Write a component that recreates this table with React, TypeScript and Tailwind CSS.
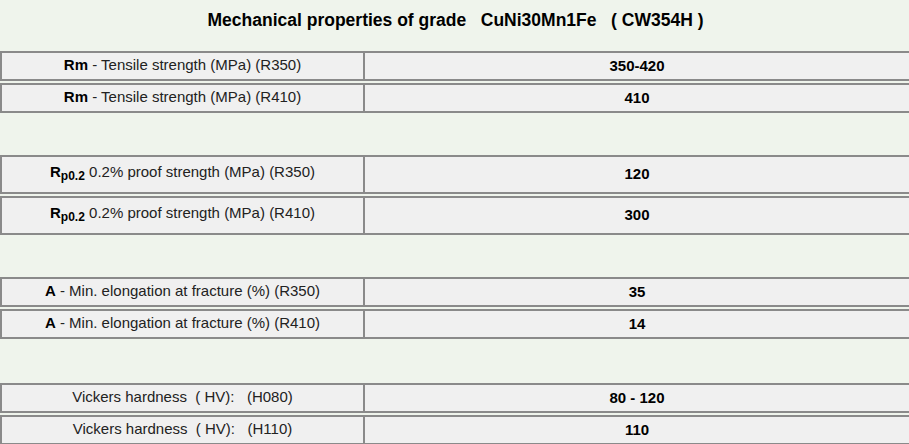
import type { ReactNode } from 'react'

type Row = { label: ReactNode; value: string; tall?: boolean }

const Rp = () => (
  <>
    <b className="text-black">
      R<sub className="text-[12px]">p0.2</sub>
    </b>{' '}
  </>
)

const groups: Row[][] = [
  [
    { label: <><b className="text-black">Rm</b> - Tensile strength (MPa) (R350)</>, value: '350-420' },
    { label: <><b className="text-black">Rm</b> - Tensile strength (MPa) (R410)</>, value: '410' },
  ],
  [
    { label: <><Rp />0.2% proof strength (MPa) (R350)</>, value: '120', tall: true },
    { label: <><Rp />0.2% proof strength (MPa) (R410)</>, value: '300', tall: true },
  ],
  [
    { label: <><b className="text-black">A</b> - Min. elongation at fracture (%) (R350)</>, value: '35' },
    { label: <><b className="text-black">A</b> - Min. elongation at fracture (%) (R410)</>, value: '14' },
  ],
  [
    { label: <>Vickers hardness&nbsp; ( HV):&nbsp;&nbsp; (H080)</>, value: '80 - 120' },
    { label: <>Vickers hardness&nbsp; ( HV):&nbsp;&nbsp; (H110)</>, value: '110' },
  ],
]

export default function App() {
  return (
    <div
      className="min-h-[444px] w-[911px] bg-[#eff4ec] text-[15px] text-[#222]"
      style={{ fontFamily: '"Liberation Sans", Arial, sans-serif' }}
    >
      {/* Title */}
      <div className="h-[51px] pt-[7px] text-center text-[17.5px] font-bold text-black">
        Mechanical properties of grade&nbsp;&nbsp; CuNi30Mn1Fe&nbsp;&nbsp; ( CW354H )
      </div>

      <div className="flex flex-col">
        {groups.map((g, gi) => (
          <div
            key={gi}
            className={`flex flex-col gap-[2px] ${gi === 0 ? '' : gi === 3 ? 'mt-[44px]' : 'mt-[42px]'}`}
          >
            {g.map((r, ri) => (
              <div
                key={ri}
                className={`flex border-2 border-[#8a8a8a] bg-[#f0f0f0] ${r.tall ? 'h-[39px]' : 'h-[30px]'}`}
              >
                <div className={`flex w-[363px] items-center justify-center border-r-2 border-[#8a8a8a] ${r.tall ? 'pb-[4px]' : 'pb-[1px]'}`}>
                  <span>{r.label}</span>
                </div>
                <div className="flex flex-1 items-center justify-center font-bold text-black">
                  {r.value}
                </div>
              </div>
            ))}
          </div>
        ))}
      </div>
    </div>
  )
}
